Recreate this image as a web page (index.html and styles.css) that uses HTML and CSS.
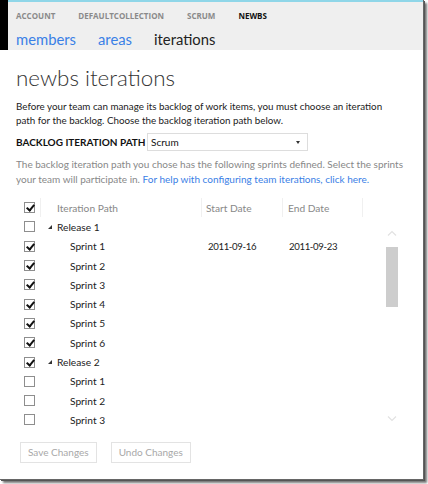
FILE: index.html
```html
<!DOCTYPE html>
<html>
<head>
<meta charset="utf-8">
<link rel="stylesheet" href="styles.css">
</head>
<body>
<div class="frame">
  <div class="header">
    <div class="edge"></div>
    <div class="hdr-main">
      <div class="crumbs">
        <span class="crumb">ACCOUNT</span>
        <span class="crumb">DEFAULTCOLLECTION</span>
        <span class="crumb">SCRUM</span>
        <span class="crumb current">NEWBS</span>
      </div>
      <div class="tabs">
        <span class="tab link">members</span>
        <span class="tab link">areas</span>
        <span class="tab">iterations</span>
      </div>
    </div>
  </div>
  <div class="content">
    <h1 class="title">newbs iterations</h1>
    <p class="intro">Before your team can manage its backlog of work items, you must choose an iteration path for the backlog. Choose the backlog iteration path below.</p>
    <div class="path-row">
      <span class="path-label">BACKLOG ITERATION PATH</span>
      <div class="select"><span>Scrum</span><span class="caret"></span></div>
    </div>
    <p class="note">The backlog iteration path you chose has the following sprints defined. Select the sprints your team will participate in. <span class="help">For help with configuring team iterations, click here.</span></p>
    <div class="grid-wrap">
      <div class="grid">
        <div class="row head">
          <div class="c-check"><span class="cb on"></span></div>
          <div class="c-path">Iteration Path</div>
          <div class="c-start">Start Date</div>
          <div class="c-end">End Date</div>
          <div class="c-last"></div>
        </div>
        <div class="row"><div class="c-check"><span class="cb"></span></div><div class="c-path rel"><span class="tri"></span>Release 1</div><div class="c-start"></div><div class="c-end"></div></div>
        <div class="row"><div class="c-check"><span class="cb on"></span></div><div class="c-path spr">Sprint 1</div><div class="c-start date">2011-09-16</div><div class="c-end date">2011-09-23</div></div>
        <div class="row"><div class="c-check"><span class="cb on"></span></div><div class="c-path spr">Sprint 2</div><div class="c-start"></div><div class="c-end"></div></div>
        <div class="row"><div class="c-check"><span class="cb on"></span></div><div class="c-path spr">Sprint 3</div><div class="c-start"></div><div class="c-end"></div></div>
        <div class="row"><div class="c-check"><span class="cb on"></span></div><div class="c-path spr">Sprint 4</div><div class="c-start"></div><div class="c-end"></div></div>
        <div class="row"><div class="c-check"><span class="cb on"></span></div><div class="c-path spr">Sprint 5</div><div class="c-start"></div><div class="c-end"></div></div>
        <div class="row"><div class="c-check"><span class="cb on"></span></div><div class="c-path spr">Sprint 6</div><div class="c-start"></div><div class="c-end"></div></div>
        <div class="row"><div class="c-check"><span class="cb on"></span></div><div class="c-path rel"><span class="tri"></span>Release 2</div><div class="c-start"></div><div class="c-end"></div></div>
        <div class="row"><div class="c-check"><span class="cb"></span></div><div class="c-path spr">Sprint 1</div><div class="c-start"></div><div class="c-end"></div></div>
        <div class="row"><div class="c-check"><span class="cb"></span></div><div class="c-path spr">Sprint 2</div><div class="c-start"></div><div class="c-end"></div></div>
        <div class="row"><div class="c-check"><span class="cb"></span></div><div class="c-path spr">Sprint 3</div><div class="c-start"></div><div class="c-end"></div></div>
      </div>
      <div class="scroll">
        <svg class="chev" width="10" height="6" viewBox="0 0 10 6"><path d="M1 5.5 L5 1.5 L9 5.5" fill="none" stroke="#e2e2e2" stroke-width="1.2"/></svg>
        <div class="thumb"></div>
        <div class="spacer"></div>
        <svg class="chev" width="10" height="6" viewBox="0 0 10 6"><path d="M1 0.5 L5 4.5 L9 0.5" fill="none" stroke="#e2e2e2" stroke-width="1.2"/></svg>
      </div>
    </div>
    <div class="buttons">
      <span class="btn">Save Changes</span>
      <span class="btn">Undo Changes</span>
    </div>
  </div>
</div>
</body>
</html>
```
FILE: styles.css
```css
* { box-sizing: border-box; }
html, body { margin: 0; padding: 0; background: #fff; }
body {
  font-family: Lato, "Open Sans", sans-serif;
  color: #222;
  width: 428px;
  height: 484px;
  overflow: hidden;
}
.frame {
  width: 424px;
  height: 480px;
  background: #fff;
  box-shadow: 1px 1px 0 #555, 3px 3px 2px #777;
  border-right: 1px solid #666;
  border-bottom: 1px solid #666;
}
.header { display: flex; height: 50px; }
.edge { width: 8px; background: #000; }
.hdr-main {
  flex: 1;
  background: #efefef;
  border-top: 2px solid #8fd6e8;
  padding-left: 8px;
}
.crumbs {
  display: flex;
  gap: 23px;
  height: 23px;
  align-items: center;
  padding-top: 3px;
  font-family: "Open Sans", sans-serif;
  font-size: 8px;
  font-weight: 700;
  color: #8a8a8a;
}
.crumb.current { color: #111; }
.tabs {
  display: flex;
  gap: 22px;
  font-size: 14.8px;
  line-height: 20px;
  margin-top: 4px;
}
.tab { color: #222; }
.tab.link { color: #3a80e6; }
.content { padding: 0 0 0 16px; }
.title {
  margin: 15px 0 0;
  font-size: 22.4px;
  font-weight: 300;
  line-height: 26px;
  color: #333;
}
.intro {
  margin: 8px 0 0;
  font-size: 9.8px;
  line-height: 14px;
  width: 380px;
  color: #222;
}
.path-row { display: flex; align-items: center; margin-top: 6px; height: 18px; }
.path-label {
  font-size: 10px;
  font-weight: 700;
  color: #111;
  width: 131px;
  white-space: nowrap;
}
.select {
  width: 161px;
  height: 18px;
  border: 1px solid #ddd;
  display: flex;
  align-items: center;
  justify-content: space-between;
  padding: 0 7px 0 3px;
  font-size: 10px;
  color: #111;
}
.caret {
  width: 0; height: 0;
  border-left: 2.5px solid transparent;
  border-right: 2.5px solid transparent;
  border-top: 3px solid #333;
}
.note {
  margin: 6px 0 0;
  font-size: 10px;
  line-height: 15px;
  color: #888;
  width: 396px;
}
.help { color: #3a80e6; }
.grid-wrap { display: flex; margin-top: 11px; }
.grid { width: 358px; }
.row { display: flex; height: 19.3px; align-items: center; font-size: 10.2px; color: #222; }
.row.head { color: #888; }
.row > div { height: 100%; display: flex; align-items: center; }
.c-check { width: 24px; padding-left: 8px; }
.c-path { width: 161px; padding-left: 16px; }
.c-start { width: 81px; padding-left: 7px; }
.c-end { width: 80px; padding-left: 7px; }
.date { font-size: 9.6px; letter-spacing: -0.35px; }
.head .c-path, .head .c-start, .head .c-end, .head .c-last { border-left: 1px solid #f0f0f0; }
.head .c-start { padding-left: 4px; }
.head .c-end { padding-left: 5px; }
.head .c-last { width: 10px; }
.rel { padding-left: 8px; }
.spr { padding-left: 30px; }
.tri {
  width: 0; height: 0;
  border-left: 4px solid transparent;
  border-bottom: 4px solid #333;
  margin-right: 5px;
}
.cb {
  width: 11px; height: 11px;
  border: 1px solid #8e8e8e;
  background: #fff;
  display: block;
  position: relative;
}
.cb.on::after {
  content: "";
  position: absolute;
  left: 3px; top: 0px;
  width: 3px; height: 6px;
  border-right: 2px solid #111;
  border-bottom: 2px solid #111;
  transform: rotate(40deg);
}
.scroll {
  width: 20px;
  margin-left: 8px;
  display: flex;
  flex-direction: column;
  align-items: center;
  padding-top: 32px;
  height: 224px;
}
.chev { display: block; }
.thumb { width: 12px; height: 60px; background: #cdcdcd; margin-top: 11px; }
.spacer { flex: 1; }
.buttons { display: flex; gap: 14px; margin-top: 12px; padding-left: 4px; }
.btn {
  border: 1px solid #e3e3e3;
  height: 21px;
  display: flex;
  align-items: center;
  padding: 0 7px;
  font-size: 10px;
  color: #a8a8a8;
}
```
